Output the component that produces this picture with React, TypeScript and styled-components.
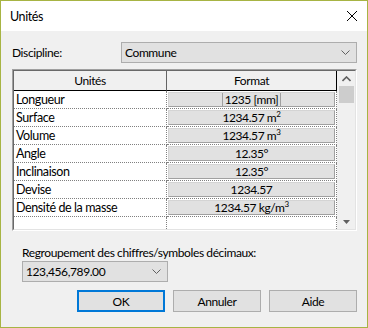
import { FC } from 'react';
import styled, { createGlobalStyle } from 'styled-components';

const GlobalStyle = createGlobalStyle`
	html, body {
		margin: 0;
		padding: 0;
		background: #ffffff;
	}
	body {
		font-family: Lato, 'Noto Sans', sans-serif;
		font-size: 12px;
		letter-spacing: -0.4px;
		color: #000000;
	}
`;

type Row = { name: string; value: string; sup?: string; framed?: boolean };

const rows: Row[] = [
	{ name: 'Longueur', value: '1235 [mm]', framed: true },
	{ name: 'Surface', value: '1234.57 m', sup: '2' },
	{ name: 'Volume', value: '1234.57 m', sup: '3' },
	{ name: 'Angle', value: '12.35°' },
	{ name: 'Inclinaison', value: '12.35°' },
	{ name: 'Devise', value: '1234.57' },
	{ name: 'Densité de la masse', value: '1234.57 kg/m', sup: '3' },
	{ name: '', value: '' },
];

const Chevron: FC = () => (
	<svg width="9" height="5" viewBox="0 0 9 5">
		<path d="M0.5 0.5 L4.5 4.5 L8.5 0.5" fill="none" stroke="#606060" strokeWidth="1" />
	</svg>
);

const App: FC = () => {
	return (
		<>
			<GlobalStyle />
			<Window>
				<TitleBar>
					<Title>Unités</Title>
					<svg width="10" height="10" viewBox="0 0 10 10">
						<path d="M0 0 L10 10 M10 0 L0 10" stroke="#000" strokeWidth="1" />
					</svg>
				</TitleBar>
				<Body>
					<FieldRow>
						<FieldLabel>Discipline:</FieldLabel>
						<Combo $width={236}>
							<span>Commune</span>
							<Chevron />
						</Combo>
					</FieldRow>

					<Frame>
						<Inner>
							<Grid>
								<HeaderCell>Unités</HeaderCell>
								<HeaderCell $active>Format</HeaderCell>
								{rows.map((r, i) => (
									<RowPair key={i} row={r} />
								))}
							</Grid>
							<ScrollBar>
								<ScrollArrow>
									<svg width="9" height="6" viewBox="0 0 9 6">
										<path d="M0.5 5 L4.5 1 L8.5 5" fill="none" stroke="#606060" strokeWidth="1.6" />
									</svg>
								</ScrollArrow>
								<Thumb />
								<ScrollSpace />
								<ScrollArrow>
									<svg width="7" height="4" viewBox="0 0 7 4">
										<path d="M0 0 L7 0 L3.5 4 Z" fill="#606060" />
									</svg>
								</ScrollArrow>
							</ScrollBar>
						</Inner>
					</Frame>

					<Bottom>
						<GroupLabel>Regroupement des chiffres/symboles décimaux:</GroupLabel>
						<Combo $width={146}>
							<span>123,456,789.00</span>
							<Chevron />
						</Combo>
						<Buttons>
							<Button $primary>OK</Button>
							<Button>Annuler</Button>
							<Button>Aide</Button>
						</Buttons>
					</Bottom>
				</Body>
			</Window>
		</>
	);
};

const RowPair: FC<{ row: Row }> = ({ row }) => (
	<>
		<NameCell>{row.name}</NameCell>
		<FormatCell>
			{row.value && (
				<FormatButton>
					<FormatText $framed={row.framed}>
						{row.value}
						{row.sup && <Sup>{row.sup}</Sup>}
					</FormatText>
				</FormatButton>
			)}
		</FormatCell>
	</>
);

export default App;

const Window = styled.div`
	width: 368px;
	height: 328px;
	box-sizing: border-box;
	border: 1px solid #a7b443;
	display: flex;
	flex-direction: column;
	background: #f0f0f0;
`;

const TitleBar = styled.div`
	height: 30px;
	background: #ffffff;
	display: flex;
	align-items: center;
	justify-content: space-between;
	padding: 0 10px 0 9px;
	flex-shrink: 0;
`;

const Title = styled.div`
	font-size: 12.5px;
	line-height: 16px;
	padding-top: 1px;
`;

const Body = styled.div`
	flex: 1;
	display: flex;
	flex-direction: column;
	padding: 11px 10px 0 11px;
`;

const FieldRow = styled.div`
	display: flex;
	align-items: center;
	height: 21px;
`;

const FieldLabel = styled.div`
	width: 109px;
`;

const Combo = styled.div<{ $width: number }>`
	width: ${(p) => p.$width}px;
	height: 21px;
	box-sizing: border-box;
	border: 1px solid #adadad;
	background: #e1e1e1;
	display: flex;
	align-items: center;
	justify-content: space-between;
	padding: 0 6px 0 3px;
`;

const Frame = styled.div`
	margin-top: 6px;
	height: 162px;
	box-sizing: border-box;
	border: 1px solid;
	border-color: #a0a0a0 #ffffff #ffffff #a0a0a0;
`;

const Inner = styled.div`
	height: 100%;
	box-sizing: border-box;
	border: 1px solid;
	border-color: #696969 #e3e3e3 #e3e3e3 #696969;
	display: flex;
	overflow: hidden;
`;

const Grid = styled.div`
	display: grid;
	grid-template-columns: 153px 170px;
	grid-auto-rows: 18px;
	grid-template-rows: 20px;
	align-content: start;
	background: #ffffff;
	overflow: hidden;
`;

const HeaderCell = styled.div<{ $active?: boolean }>`
	background: #f0f0f0;
	display: flex;
	align-items: center;
	justify-content: center;
	border-bottom: 1px solid #000;
	border-right: 1px solid ${(p) => (p.$active ? '#000' : '#646464')};
	padding-bottom: 1px;
`;

const NameCell = styled.div`
	border-right: 1px dotted #808080;
	border-bottom: 1px dotted #808080;
	padding-left: 2px;
	display: flex;
	align-items: center;
	white-space: nowrap;
	font-size: 12.5px;
`;

const FormatCell = styled.div`
	border-right: 1px dotted #808080;
	border-bottom: 1px dotted #808080;
	padding: 1px 1px 0 1px;
`;

const FormatButton = styled.div`
	height: 15px;
	box-sizing: border-box;
	background: #e1e1e1;
	border: 1px solid #d4d4d4;
	border-bottom-color: #a0a0a0;
	border-right-color: #a0a0a0;
	display: flex;
	align-items: center;
	justify-content: center;
`;

const FormatText = styled.span<{ $framed?: boolean }>`
	line-height: 14px;
	padding: 0 2px;
	border-left: 1px solid ${(p) => (p.$framed ? '#a0a0a0' : 'transparent')};
	border-right: 1px solid ${(p) => (p.$framed ? '#a0a0a0' : 'transparent')};
`;

const Sup = styled.sup`
	font-size: 8px;
	vertical-align: 5px;
	line-height: 0;
`;

const ScrollBar = styled.div`
	flex: 1;
	display: flex;
	flex-direction: column;
	align-items: center;
	background: #f0f0f0;
	padding: 0 1px;
`;

const ScrollArrow = styled.div`
	height: 15px;
	width: 100%;
	display: flex;
	align-items: center;
	justify-content: center;
`;

const Thumb = styled.div`
	width: 15px;
	height: 17px;
	background: #cdcdcd;
`;

const ScrollSpace = styled.div`
	flex: 1;
`;

const Bottom = styled.div`
	padding-left: 10px;
	margin-top: 14px;
	display: flex;
	flex-direction: column;
`;

const GroupLabel = styled.div`
	line-height: 16px;
	white-space: nowrap;
`;

const Buttons = styled.div`
	margin-top: 8px;
	display: flex;
	justify-content: flex-end;
	gap: 8px;
`;

const Button = styled.div<{ $primary?: boolean }>`
	width: 88px;
	height: 22px;
	box-sizing: border-box;
	background: #e1e1e1;
	border: ${(p) => (p.$primary ? '2px solid #0078d7' : '1px solid #adadad')};
	display: flex;
	align-items: center;
	justify-content: center;
`;
